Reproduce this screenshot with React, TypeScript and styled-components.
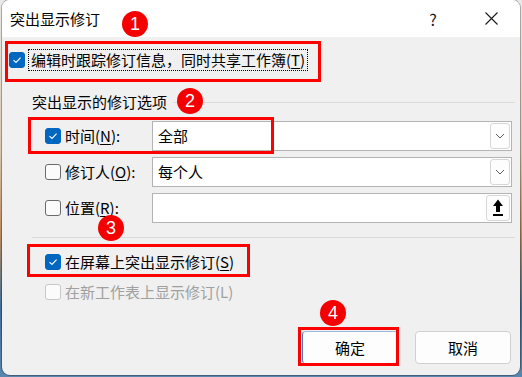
import React from 'react';
import styled, { createGlobalStyle } from 'styled-components';

const GlobalStyle = createGlobalStyle`
	html, body {
		margin: 0;
		padding: 0;
	}
	body {
		width: 522px;
		height: 377px;
		overflow: hidden;
		background: linear-gradient(180deg, #e9e9e9 0%, #d9c7ae 40%, #b88a5c 62%, #3f6e98 82%, #5a86ad 100%);
		font-family: "Noto Sans CJK SC", "Noto Sans", sans-serif;
	}
`;

const Dialog = styled.div`
	position: relative;
	margin-left: 2px;
	width: 518px;
	height: 375px;
	border-radius: 8px;
	overflow: hidden;
	background: #f0f0f0;
	box-shadow: 0 0 0 1px rgba(0, 0, 0, 0.28);
	display: flex;
	flex-direction: column;
	color: #000;
	font-size: 15px;
`;

const TitleBar = styled.div`
	height: 37px;
	flex: none;
	display: flex;
	align-items: center;
	background: #ffffff;
	padding-left: 8px;
`;

const Title = styled.span`
	flex: 1;
	line-height: 20px;
`;

const TitleButton = styled.div`
	width: 58px;
	height: 37px;
	display: flex;
	align-items: center;
	justify-content: center;
	font-size: 16px;
	color: #1a1a1a;
`;

const Body = styled.div`
	flex: 1;
	display: flex;
	flex-direction: column;
	padding: 0 5px 0 7px;
`;

const CheckRow = styled.div<{ $top: number; $indent?: number }>`
	display: flex;
	align-items: center;
	height: 22px;
	margin-top: ${(p) => p.$top}px;
	padding-left: ${(p) => p.$indent ?? 0}px;
`;

const Box = styled.span<{ $checked?: boolean; $disabled?: boolean }>`
	width: 16px;
	height: 16px;
	flex: none;
	box-sizing: border-box;
	border-radius: 3px;
	display: flex;
	align-items: center;
	justify-content: center;
	background: ${(p) => (p.$checked ? '#0067c0' : '#fbfbfb')};
	border: 1px solid
		${(p) => (p.$checked ? '#0067c0' : p.$disabled ? '#c8c8c8' : '#6b6b6b')};
`;

const Label = styled.span<{ $focused?: boolean; $disabled?: boolean; $gap?: number }>`
	margin-left: ${(p) => p.$gap ?? 3}px;
	padding: 0 2px;
	line-height: 20px;
	white-space: nowrap;
	color: ${(p) => (p.$disabled ? '#a0a0a0' : '#000')};
	border: 1px ${(p) => (p.$focused ? 'dotted #000' : 'solid transparent')};

	u {
		text-underline-offset: 2px;
	}
`;

const Group = styled.div`
	margin-top: 21px;
	padding-left: 23px;
	display: flex;
	flex-direction: column;
`;

const GroupHeader = styled.div`
	display: flex;
	align-items: center;
	height: 20px;
	line-height: 20px;
`;

const Rule = styled.div`
	flex: 1;
	height: 1px;
	margin-left: 6px;
	background: #dadada;
`;

const Options = styled.div`
	display: flex;
	flex-direction: column;
	gap: 6px;
	margin-top: 9px;
	padding: 0 3px 0 13px;
`;

const OptionRow = styled.div`
	display: flex;
	align-items: center;
	height: 30px;
`;

const OptionLabel = styled.div`
	width: 107px;
	flex: none;
	display: flex;
	align-items: center;
`;

const Combo = styled.div`
	flex: 1;
	height: 30px;
	box-sizing: border-box;
	border: 1px solid #b3b3b3;
	background: #ffffff;
	display: flex;
	align-items: center;
	padding: 1px;
`;

const ComboText = styled.span`
	flex: 1;
	padding-left: 4px;
	line-height: 20px;
`;

const DropButton = styled.span<{ $wide?: boolean }>`
	width: ${(p) => (p.$wide ? 24 : 20)}px;
	height: 100%;
	box-sizing: border-box;
	border: 1px solid #d6d6d6;
	border-radius: 3px;
	background: #fdfdfd;
	display: flex;
	align-items: center;
	justify-content: center;
`;

const Separator = styled.div`
	height: 1px;
	margin-top: 14px;
	background: #dadada;
`;

const Buttons = styled.div`
	display: flex;
	justify-content: flex-end;
	gap: 17px;
	margin-top: 28px;
	padding-right: 4px;
`;

const Button = styled.div<{ $primary?: boolean }>`
	width: 96px;
	height: 33px;
	box-sizing: border-box;
	border-radius: 4px;
	background: #fdfdfd;
	border: 1px solid #d0d0d0;
	border-left-color: ${(p) => (p.$primary ? '#3d7fc9' : '#d0d0d0')};
	border-top-color: ${(p) => (p.$primary ? '#9bb9dc' : '#d0d0d0')};
	display: flex;
	align-items: center;
	justify-content: center;
	line-height: 20px;
`;

const Mark = styled.div<{ $x: number; $y: number; $w: number; $h: number }>`
	position: absolute;
	left: ${(p) => p.$x}px;
	top: ${(p) => p.$y}px;
	width: ${(p) => p.$w}px;
	height: ${(p) => p.$h}px;
	box-sizing: border-box;
	border: 3px solid #ff0000;
	pointer-events: none;
`;

const Badge = styled.div<{ $x: number; $y: number }>`
	position: absolute;
	left: ${(p) => p.$x - 13}px;
	top: ${(p) => p.$y - 13}px;
	width: 26px;
	height: 26px;
	border-radius: 50%;
	background: #f40000;
	color: #fff;
	font-family: "Liberation Sans", Arial, sans-serif;
	font-size: 18px;
	line-height: 26px;
	text-align: center;
`;

function Check({ checked, disabled }: { checked?: boolean; disabled?: boolean }) {
	return (
		<Box $checked={checked} $disabled={disabled}>
			{checked && (
				<svg width="10" height="8" viewBox="0 0 10 8">
					<path d="M1.5 4.2 L4 6.5 L8.6 1.6" fill="none" stroke="#fff" strokeWidth="1.1" />
				</svg>
			)}
		</Box>
	);
}

function Chevron() {
	return (
		<svg width="10" height="6" viewBox="0 0 10 6">
			<path d="M1 1 L5 5 L9 1" fill="none" stroke="#5c5c5c" strokeWidth="1" />
		</svg>
	);
}

function UploadIcon() {
	return (
		<svg width="12" height="18" viewBox="0 0 12 18">
			<path d="M6 0.5 L11 7 L8 7 L8 13 L4 13 L4 7 L1 7 Z" fill="#000" />
			<rect x="1" y="15" width="10" height="2" fill="#000" />
		</svg>
	);
}

export default function App() {
	return (
		<>
			<GlobalStyle />
			<Dialog>
				<TitleBar>
					<Title>突出显示修订</Title>
					<TitleButton>?</TitleButton>
					<TitleButton>
						<svg width="13" height="13" viewBox="0 0 13 13">
							<path d="M0.5 0.5 L12.5 12.5 M12.5 0.5 L0.5 12.5" stroke="#1a1a1a" strokeWidth="1.1" />
						</svg>
					</TitleButton>
				</TitleBar>
				<Body>
					<CheckRow $top={12}>
						<Check checked />
						<Label $focused>
							编辑时跟踪修订信息，同时共享工作簿(<u>T</u>)
						</Label>
					</CheckRow>

					<Group>
						<GroupHeader>
							<span>突出显示的修订选项</span>
							<Rule />
						</GroupHeader>
						<Options>
							<OptionRow>
								<OptionLabel>
									<Check checked />
									<Label $gap={1}>
										时间(<u>N</u>):
									</Label>
								</OptionLabel>
								<Combo>
									<ComboText>全部</ComboText>
									<DropButton>
										<Chevron />
									</DropButton>
								</Combo>
							</OptionRow>
							<OptionRow>
								<OptionLabel>
									<Check />
									<Label $gap={1}>
										修订人(<u>O</u>):
									</Label>
								</OptionLabel>
								<Combo>
									<ComboText>每个人</ComboText>
									<DropButton>
										<Chevron />
									</DropButton>
								</Combo>
							</OptionRow>
							<OptionRow>
								<OptionLabel>
									<Check />
									<Label $gap={1}>
										位置(<u>R</u>):
									</Label>
								</OptionLabel>
								<Combo>
									<ComboText />
									<DropButton $wide>
										<UploadIcon />
									</DropButton>
								</Combo>
							</OptionRow>
						</Options>
						<Separator />
						<CheckRow $top={13} $indent={13}>
							<Check checked />
							<Label $gap={1}>
								在屏幕上突出显示修订(<u>S</u>)
							</Label>
						</CheckRow>
						<CheckRow $top={8} $indent={13}>
							<Check disabled />
							<Label $gap={1} $disabled>
								在新工作表上显示修订(L)
							</Label>
						</CheckRow>
					</Group>

					<Buttons>
						<Button $primary>确定</Button>
						<Button>取消</Button>
					</Buttons>
				</Body>

				<Mark $x={3} $y={41} $w={316} $h={41} />
				<Mark $x={26} $y={117} $w={246} $h={37} />
				<Mark $x={25} $y={244} $w={223} $h={33} />
				<Mark $x={296} $y={327} $w={101} $h={39} />
				<Badge $x={133} $y={24}>1</Badge>
				<Badge $x={188} $y={101}>2</Badge>
				<Badge $x={109} $y={228}>3</Badge>
				<Badge $x={331} $y={313}>4</Badge>
			</Dialog>
		</>
	);
}
